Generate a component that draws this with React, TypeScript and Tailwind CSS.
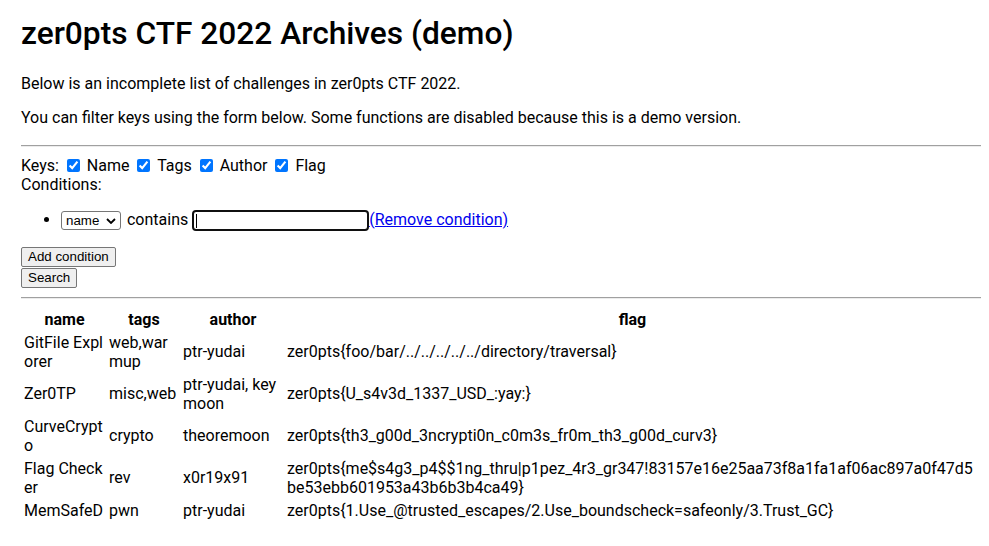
import { useState } from "react";

type Challenge = {
    name: string;
    tags: string;
    author: string;
    flag: string;
};

const challenges: Challenge[] = [
    {
        name: "GitFile Explorer",
        tags: "web,warmup",
        author: "ptr-yudai",
        flag: "zer0pts{foo/bar/../../../../../directory/traversal}",
    },
    {
        name: "Zer0TP",
        tags: "misc,web",
        author: "ptr-yudai, keymoon",
        flag: "zer0pts{U_s4v3d_1337_USD_:yay:}",
    },
    {
        name: "CurveCrypto",
        tags: "crypto",
        author: "theoremoon",
        flag: "zer0pts{th3_g00d_3ncrypti0n_c0m3s_fr0m_th3_g00d_curv3}",
    },
    {
        name: "Flag Checker",
        tags: "rev",
        author: "x0r19x91",
        flag: "zer0pts{me$s4g3_p4$$1ng_thru|p1pez_4r3_gr347!83157e16e25aa73f8a1fa1af06ac897a0f47d5be53ebb601953a43b6b3b4ca49}",
    },
    {
        name: "MemSafeD",
        tags: "pwn",
        author: "ptr-yudai",
        flag: "zer0pts{1.Use_@trusted_escapes/2.Use_boundscheck=safeonly/3.Trust_GC}",
    },
];

const keys = ["Name", "Tags", "Author", "Flag"];

export default function App() {
    const [checked, setChecked] = useState<Record<string, boolean>>({
        Name: true,
        Tags: true,
        Author: true,
        Flag: true,
    });

    return (
        <div className="ml-[21px] w-[960px] font-['Roboto','Liberation_Sans',sans-serif] text-[16px] leading-[18.75px] text-black">
            <h1 className="mt-[15px] mb-[22px] text-[31.7px] leading-[37.5px] font-medium">
                zer0pts CTF 2022 Archives (demo)
            </h1>
            <p className="mb-[16px]">
                Below is an incomplete list of challenges in zer0pts CTF 2022.
            </p>
            <p>
                You can filter keys using the form below. Some functions are
                disabled because this is a demo version.
            </p>
            <hr className="mt-[17px] mb-[9px] h-0 border-t border-b border-t-[#a0a0a0] border-b-[#ececec]" />

            <div>
                Keys:{" "}
                {keys.map((k) => (
                    <label key={k}>
                        <input
                            type="checkbox"
                            checked={checked[k]}
                            onChange={() =>
                                setChecked({ ...checked, [k]: !checked[k] })
                            }
                            className="ml-[4px] mr-[3px] my-[3px] h-[13px] w-[13px] align-[-1px] accent-[#0075ff]"
                        />{" "}
                        {k}{" "}
                    </label>
                ))}
            </div>
            <div>Conditions:</div>
            <ul className="mt-[15px] mb-[16px] list-disc pl-10">
                <li>
                    <span className="relative mr-[2px] inline-block">
                        <select className="h-[19px] w-[60px] appearance-none rounded-[3px] border border-[#767676] bg-white pl-[4px] font-['Liberation_Sans',sans-serif] text-[13.33px] leading-[15px]">
                            <option>name</option>
                        </select>
                        <svg
                            className="pointer-events-none absolute right-[5px] top-[7px]"
                            width="10"
                            height="6"
                            viewBox="0 0 10 6"
                        >
                            <path
                                d="M1 1l4 4 4-4"
                                fill="none"
                                stroke="#000"
                                strokeWidth="1.8"
                            />
                        </svg>
                    </span>{" "}
                    contains{" "}
                    <span className="relative inline-block">
                        <input
                            type="text"
                            className="h-[21px] w-[177px] rounded-[4px] border-2 border-[#101010] bg-white px-[2px] font-['Liberation_Sans',sans-serif] text-[13.33px] outline-none"
                        />
                        <span className="pointer-events-none absolute left-[4px] top-[4px] h-[14px] w-px bg-black" />
                    </span>
                    <a href="#" className="text-[#0000ee] underline">
                        (Remove condition)
                    </a>
                </li>
            </ul>
            <div className="flex flex-col items-start gap-px">
                <button className="h-[20px] rounded-[2px] border border-[#767676] bg-[#efefef] px-[6px] font-['Liberation_Sans',sans-serif] text-[13.33px] leading-[15px]">
                    Add condition
                </button>
                <button className="h-[20px] rounded-[2px] border border-[#767676] bg-[#efefef] px-[6px] font-['Liberation_Sans',sans-serif] text-[13.33px] leading-[15px]">
                    Search
                </button>
            </div>
            <hr className="mt-[9px] mb-[8px] h-0 border-t border-b border-t-[#a0a0a0] border-b-[#ececec]" />

            <table className="w-full table-fixed border-separate border-spacing-[2px] break-all leading-[19px]">
                <thead>
                    <tr>
                        <th className="w-[83px] p-px text-center font-bold">name</th>
                        <th className="w-[72px] p-px text-center font-bold">tags</th>
                        <th className="w-[102px] p-px text-center font-bold">author</th>
                        <th className="p-px text-center font-bold">flag</th>
                    </tr>
                </thead>
                <tbody>
                    {challenges.map((c) => (
                        <tr key={c.name}>
                            <td className="p-px align-middle">{c.name}</td>
                            <td className="p-px align-middle">{c.tags}</td>
                            <td className="p-px align-middle">{c.author}</td>
                            <td className="p-px align-middle">{c.flag}</td>
                        </tr>
                    ))}
                </tbody>
            </table>
        </div>
    );
}
